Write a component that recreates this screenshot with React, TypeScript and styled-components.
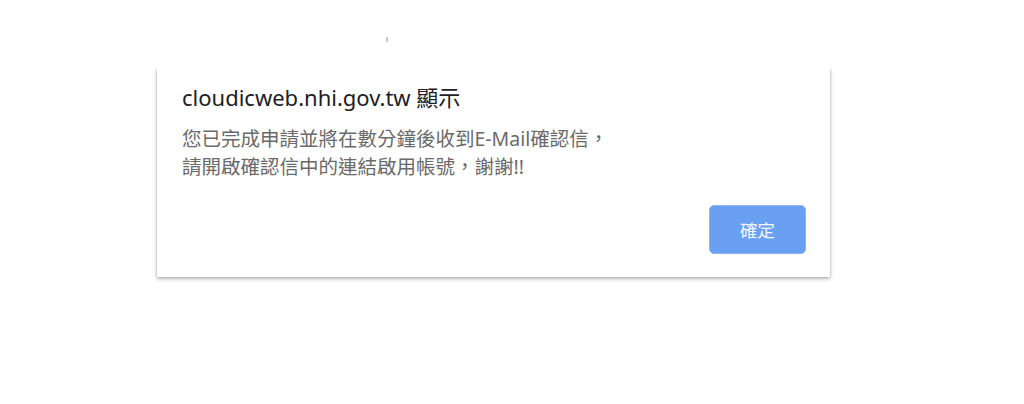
import React from "react";
import styled, { createGlobalStyle } from "styled-components";

const GlobalStyle = createGlobalStyle`
  html, body {
    margin: 0;
    padding: 0;
    background: #fff;
    font-family: "Segoe UI", "Noto Sans", "Noto Sans CJK TC", sans-serif;
  }
`;

const Page = styled.div`
  width: 1024px;
  height: 404px;
  overflow: hidden;
  background: #fff;
`;

const TopStrip = styled.div`
  height: 68px;
  display: flex;
  align-items: flex-start;
`;

// tiny grey speck left over above the dialog
const Speck = styled.span`
  display: block;
  width: 2px;
  height: 5px;
  margin: 37px 0 0 386px;
  background: #c8c8c8;
`;

const Dialog = styled.div`
  margin-left: 157px;
  width: 673px;
  height: 209px;
  box-sizing: border-box;
  background: #fff;
  padding: 13px 24px 23px 25px;
  display: flex;
  flex-direction: column;
  box-shadow: 0 2px 4px rgba(0, 0, 0, 0.28), 0 0 2px rgba(0, 0, 0, 0.2);
  clip-path: inset(0 -12px -12px -12px);
`;

const Title = styled.div`
  font-size: 22px;
  line-height: 32px;
  color: #202124;
`;

const Message = styled.div`
  margin-top: 12px;
  font-size: 19.5px;
  line-height: 28px;
  color: #6a6a6a;
`;

const Actions = styled.div`
  margin-top: auto;
  display: flex;
  justify-content: flex-end;
`;

const OkButton = styled.button`
  width: 97px;
  height: 49px;
  border: 1px solid #8db4f0;
  border-radius: 5px;
  background: #6aa0f1;
  color: #f4f7ff;
  font-family: inherit;
  font-size: 17.5px;
  cursor: pointer;
`;

export default function App() {
  return (
    <Page>
      <GlobalStyle />
      <TopStrip>
        <Speck />
      </TopStrip>
      <Dialog>
        <Title>cloudicweb.nhi.gov.tw 顯示</Title>
        <Message>
          您已完成申請並將在數分鐘後收到E-Mail確認信，
          <br />
          請開啟確認信中的連結啟用帳號，謝謝!!
        </Message>
        <Actions>
          <OkButton>確定</OkButton>
        </Actions>
      </Dialog>
    </Page>
  );
}
